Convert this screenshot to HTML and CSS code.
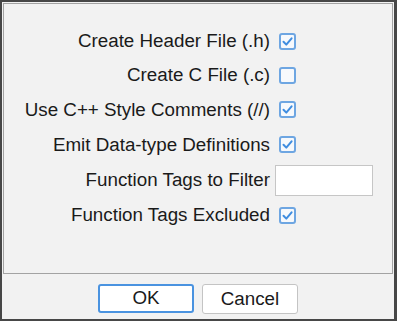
FILE: index.html
```html
<!DOCTYPE html>
<html>
<head>
<meta charset="utf-8">
<link rel="stylesheet" href="styles.css">
</head>
<body>
<div class="window">
  <div class="panel">
    <div class="form">
      <div class="row r34"><span class="label">Create Header File (.h)</span><span class="cb checked"><svg viewBox="0 0 17 17" width="17" height="17"><path d="M4.5 8.8 L7.3 11.6 L12.6 5.3" /></svg></span></div>
      <div class="row r34"><span class="label">Create C File (.c)</span><span class="cb"></span></div>
      <div class="row r35"><span class="label">Use C++ Style Comments (//)</span><span class="cb checked"><svg viewBox="0 0 17 17" width="17" height="17"><path d="M4.5 8.8 L7.3 11.6 L12.6 5.3" /></svg></span></div>
      <div class="row r35"><span class="label">Emit Data-type Definitions</span><span class="cb checked"><svg viewBox="0 0 17 17" width="17" height="17"><path d="M4.5 8.8 L7.3 11.6 L12.6 5.3" /></svg></span></div>
      <div class="row r36"><span class="label">Function Tags to Filter</span><span class="field"></span></div>
      <div class="row r34"><span class="label">Function Tags Excluded</span><span class="cb checked"><svg viewBox="0 0 17 17" width="17" height="17"><path d="M4.5 8.8 L7.3 11.6 L12.6 5.3" /></svg></span></div>
    </div>
  </div>
  <div class="footer">
    <button class="btn default">OK</button>
    <button class="btn">Cancel</button>
  </div>
</div>
</body>
</html>
```
FILE: styles.css
```css
html, body {
  margin: 0;
  padding: 0;
  background: #f2f2f2;
}
.window {
  width: 397px;
  height: 321px;
  box-sizing: border-box;
  border: 2px solid #474747;
  border-right-width: 3px;
  background: #f2f2f2;
  display: flex;
  flex-direction: column;
  font-family: "Liberation Sans", Arial, sans-serif;
  font-size: 18.8px;
  color: #1a1a1a;
}
.panel {
  margin: 1px 1px 0 1px;
  height: 271px;
  box-sizing: border-box;
  border: 1px solid #a3a3a3;
  background: #f2f2f2;
  padding-top: 20px;
}
.form {
  display: flex;
  flex-direction: column;
}
.row {
  display: grid;
  grid-template-columns: 266px 1fr;
  column-gap: 5px;
  align-items: center;
}
.r34 { height: 34px; }
.r35 { height: 35px; }
.r36 { height: 36px; }
.label {
  text-align: right;
  white-space: nowrap;
}
.cb {
  margin-left: 4px;
  width: 17px;
  height: 17px;
  box-sizing: border-box;
  border: 2px solid #6ea6e2;
  border-radius: 3px;
  background: #f7f9fc;
  position: relative;
}
.cb svg {
  position: absolute;
  left: -2px;
  top: -2px;
}
.cb path {
  fill: none;
  stroke: #3f8de0;
  stroke-width: 2;
  stroke-linecap: round;
  stroke-linejoin: round;
}
.field {
  width: 98px;
  height: 31px;
  box-sizing: border-box;
  border: 1px solid #c6c6c6;
  background: #ffffff;
}
.footer {
  flex: 1;
  display: flex;
  justify-content: center;
  align-items: flex-start;
  gap: 8px;
  padding-top: 10px;
}
.btn {
  font-family: "Liberation Sans", Arial, sans-serif;
  font-size: 18.8px;
  color: #1a1a1a;
  background: #ffffff;
  width: 96px;
  height: 30px;
  box-sizing: border-box;
  border: 1px solid #c4c4c4;
  border-radius: 3px;
  padding: 0;
  margin: 0;
  line-height: 1;
}
.btn.default {
  border: 2px solid #4a93e0;
  height: 29px;
}
```
